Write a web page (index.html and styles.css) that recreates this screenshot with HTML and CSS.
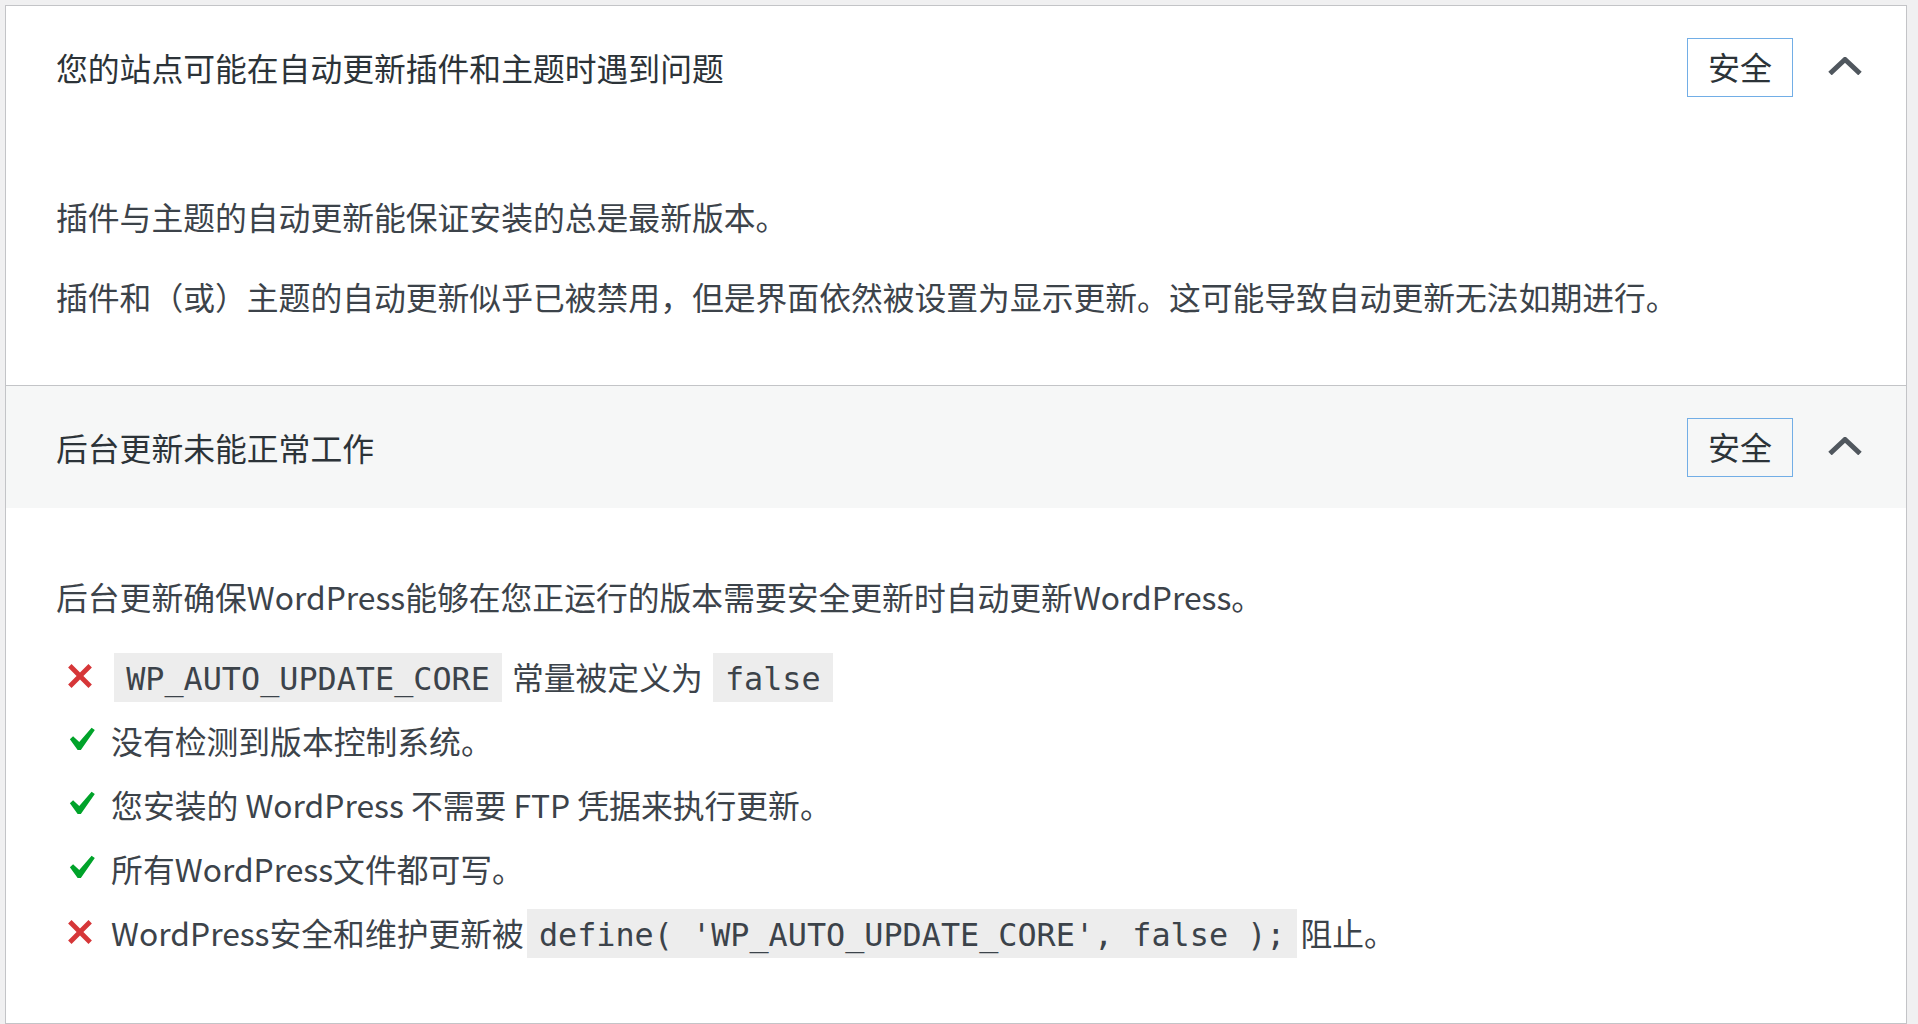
FILE: index.html
```
<!DOCTYPE html>
<html lang="zh-CN">
<head>
<meta charset="utf-8">
<title>站点健康</title>
<link rel="stylesheet" href="styles.css">
</head>
<body>
<div class="accordion">
  <div class="acc-heading">
    <div class="acc-trigger">
      <span class="title">您的站点可能在自动更新插件和主题时遇到问题</span>
      <span class="badge">安全</span>
      <svg class="chev" width="34" height="18" viewBox="0 0 34 18"><polyline points="2,16.5 17,2.5 32,16.5" fill="none" stroke="#50575e" stroke-width="5"/></svg>
    </div>
  </div>
  <div class="acc-panel">
    <p>插件与主题的自动更新能保证安装的总是最新版本。</p>
    <p>插件和（或）主题的自动更新似乎已被禁用，但是界面依然被设置为显示更新。这可能导致自动更新无法如期进行。</p>
  </div>
  <div class="acc-heading sep">
    <div class="acc-trigger active">
      <span class="title">后台更新未能正常工作</span>
      <span class="badge">安全</span>
      <svg class="chev" width="34" height="18" viewBox="0 0 34 18"><polyline points="2,16.5 17,2.5 32,16.5" fill="none" stroke="#50575e" stroke-width="5"/></svg>
    </div>
  </div>
  <div class="acc-panel">
    <p>后台更新确保WordPress能够在您正运行的版本需要安全更新时自动更新WordPress。</p>
    <ul class="checks">
      <li><svg class="ico" viewBox="0 0 20 20"><path class="no" d="M14.95 6.46L11.41 10l3.54 3.54-1.41 1.41L10 11.42l-3.53 3.53-1.42-1.42L8.58 10 5.05 6.47l1.42-1.42L10 8.58l3.54-3.53z"/></svg> <code>WP_AUTO_UPDATE_CORE</code> 常量被定义为 <code>false</code></li>
      <li><svg class="ico" viewBox="0 0 20 20"><path class="yes" d="M14.83 4.89l1.34.94-5.81 8.38H9.02L5.78 9.67l1.34-1.25 2.57 2.4z"/></svg> 没有检测到版本控制系统。</li>
      <li><svg class="ico" viewBox="0 0 20 20"><path class="yes" d="M14.83 4.89l1.34.94-5.81 8.38H9.02L5.78 9.67l1.34-1.25 2.57 2.4z"/></svg> 您安装的 WordPress 不需要 FTP 凭据来执行更新。</li>
      <li><svg class="ico" viewBox="0 0 20 20"><path class="yes" d="M14.83 4.89l1.34.94-5.81 8.38H9.02L5.78 9.67l1.34-1.25 2.57 2.4z"/></svg> 所有WordPress文件都可写。</li>
      <li><svg class="ico" viewBox="0 0 20 20"><path class="no" d="M14.95 6.46L11.41 10l3.54 3.54-1.41 1.41L10 11.42l-3.53 3.53-1.42-1.42L8.58 10 5.05 6.47l1.42-1.42L10 8.58l3.54-3.53z"/></svg> WordPress安全和维护更新被<code>define( 'WP_AUTO_UPDATE_CORE', false );</code>阻止。</li>
    </ul>
  </div>
</div>
</body>
</html>
```

FILE: styles.css
```
html, body {
  background: #f0f0f1;
}
body {
  margin: 5px 11px 0 5px;
  font-family: "Noto Sans CJK SC", "Noto Sans", sans-serif;
  color: #3c434a;
  font-size: 31.8px;
  line-height: 48px;
}
.accordion {
  background: #fff;
  border: 1px solid #c3c4c7;
}
.acc-heading {
  margin: 0;
}
.acc-heading.sep {
  border-top: 1px solid #c3c4c7;
}
.acc-trigger {
  display: flex;
  align-items: center;
  height: 122px;
  box-sizing: border-box;
  padding: 0 44px 0 50px;
  background: #fff;
  color: #2c3338;
}
.acc-trigger.active {
  background: #f6f7f7;
}
.title {
  flex-grow: 1;
  font-size: 31.8px;
  font-weight: 400;
}
.badge {
  box-sizing: border-box;
  height: 59px;
  line-height: 55px;
  padding: 0 20px;
  border: 1px solid #72aee6;
  font-size: 32px;
  color: #2c3338;
}
.chev {
  display: block;
  margin-left: 35px;
  margin-top: -3px;
}
.acc-panel {
  padding: 32px 50px 33px;
}
.acc-panel p {
  margin: 32px 0;
}
.checks {
  list-style: none;
  margin: 32px 0 34px;
  padding: 0;
}
.checks li {
  margin: 0 0 16px;
  line-height: 48px;
}
.ico {
  width: 48px;
  height: 48px;
  vertical-align: top;
}
.ico .no {
  fill: #d63638;
}
.ico .yes {
  fill: #00a32a;
}
code {
  font-family: "DejaVu Sans Mono", monospace;
  font-size: 31.8px;
  line-height: 1;
  padding: 7px 12px 5px;
  margin: 0 3px;
  background: rgba(0, 0, 0, 0.07);
  color: #3c434a;
}
```
